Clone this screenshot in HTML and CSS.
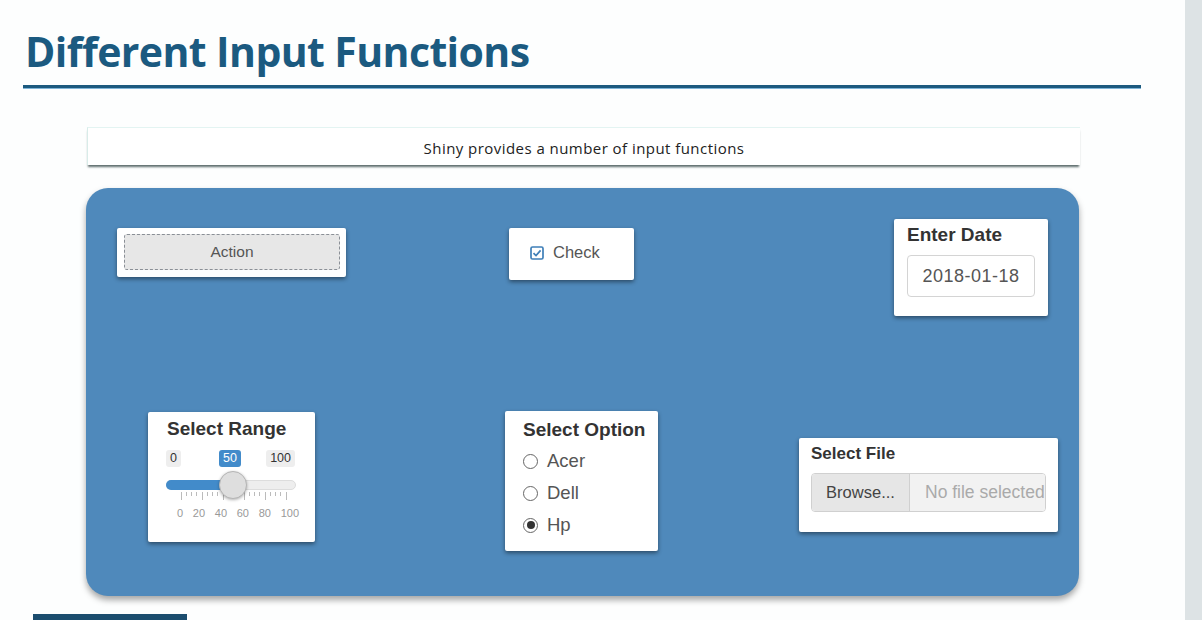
FILE: index.html
```html
<!DOCTYPE html>
<html>
<head>
<meta charset="utf-8">
<link rel="stylesheet" href="styles.css">
</head>
<body>
<div class="slide">
  <h1 class="title">Different Input Functions</h1>
  <div class="rule"></div>
  <div class="banner">Shiny provides a number of input functions</div>
  <div class="panel">
    <div class="card card-action">
      <div class="btn">Action</div>
    </div>
    <div class="card card-check">
      <svg class="cbox" width="14" height="14" viewBox="0 0 14 14"><rect x="1" y="1" width="12" height="12" rx="1.5" fill="#fff" stroke="#3f7fb8" stroke-width="1.7"/><path d="M3.5 7.2 L6 9.6 L10.6 4.4" fill="none" stroke="#3f7fb8" stroke-width="1.7"/></svg>
      <span class="check-label">Check</span>
    </div>
    <div class="card card-date">
      <div class="lbl">Enter Date</div>
      <div class="date-input">2018-01-18</div>
    </div>
    <div class="card card-range">
      <div class="lbl">Select Range</div>
      <div class="slider">
        <div class="s-labels">
          <span class="s-tag">0</span>
          <span class="s-tag">100</span>
          <span class="s-val" style="left:53px">50</span>
        </div>
        <div class="s-track">
          <div class="s-fill" style="width:66px"></div>
          <div class="s-handle" style="left:52px"></div>
        </div>
        <svg class="s-ticks" width="130" height="9" viewBox="0 0 130 9">
          <g stroke="#bbb" stroke-width="1">
            <path d="M15.5 0v8M36.5 0v8M57.5 0v8M78.5 0v8M99.5 0v8M120.5 0v8"/>
            <path d="M20.5 0v4M25.5 0v4M30.5 0v4M41.5 0v4M46.5 0v4M51.5 0v4M62.5 0v4M67.5 0v4M72.5 0v4M83.5 0v4M88.5 0v4M93.5 0v4M104.5 0v4M109.5 0v4M114.5 0v4"/>
          </g>
        </svg>
        <div class="s-grid">
          <span>0</span><span>20</span><span>40</span><span>60</span><span>80</span><span>100</span>
        </div>
      </div>
    </div>
    <div class="card card-option">
      <div class="lbl">Select Option</div>
      <div class="radio"><span class="rcircle"></span>Acer</div>
      <div class="radio"><span class="rcircle"></span>Dell</div>
      <div class="radio"><span class="rcircle on"></span>Hp</div>
    </div>
    <div class="card card-file">
      <div class="lbl lbl-file">Select File</div>
      <div class="file-group">
        <div class="browse">Browse...</div>
        <div class="file-name">No file selected</div>
      </div>
    </div>
  </div>
  <div class="footbar"></div>
</div>
<div class="strip"></div>
</body>
</html>
```

FILE: styles.css
```css
html, body {
  margin: 0;
  padding: 0;
  height: 620px;
  overflow: hidden;
  background: #fdfefe;
}
body {
  display: flex;
  font-family: "Liberation Sans", Arial, sans-serif;
}
.slide {
  width: 1185px;
  flex: none;
}
.strip {
  flex: 1;
  background: #dde3e5;
}
.title {
  margin: 0;
  padding: 24px 0 0 25px;
  height: 58px;
  font-family: "Open Sans", "Noto Sans", sans-serif;
  font-weight: 700;
  font-size: 41px;
  line-height: 54px;
  color: #1b5a80;
  letter-spacing: -0.6px;
}
.rule {
  margin: 3px 0 0 23px;
  width: 1118px;
  height: 3px;
  background: #1c5a7f;
  box-shadow: 0 1px 0 #7fb5d8;
}
.banner {
  margin: 39px 0 0 87px;
  width: 993px;
  height: 38px;
  box-sizing: border-box;
  background: #fff;
  border-top: 1px solid #e3f4f2;
  border-left: 1px solid #d8ece9;
  box-shadow: 0 3px 2px -1px rgba(40, 60, 60, 0.75);
  text-align: center;
  font-family: "Open Sans", sans-serif;
  font-size: 15px;
  line-height: 40px;
  color: #222;
  letter-spacing: 0.45px;
}
.panel {
  margin: 23px 0 0 86px;
  width: 993px;
  height: 408px;
  background: #4f89bb;
  border-radius: 22px;
  box-shadow: 0 4px 6px rgba(0, 0, 0, 0.35);
  display: grid;
  grid-template-columns: 394px 280px 319px;
  grid-template-rows: 200px 208px;
  align-items: start;
  justify-items: start;
}
.card {
  background: #fff;
  border-radius: 2px;
  box-shadow: 0 2px 4px rgba(0, 0, 0, 0.45);
  box-sizing: border-box;
  color: #333;
}
.lbl {
  font-weight: 700;
  font-size: 19px;
  line-height: 22px;
  color: #333;
}
.card-action {
  margin: 40px 0 0 31px;
  width: 229px;
  height: 49px;
  padding: 6px 6px 0 7px;
}
.btn {
  height: 36px;
  box-sizing: border-box;
  background: #e7e7e7;
  border: 1px dashed #8a8f96;
  border-radius: 3px;
  text-align: center;
  font-size: 15.5px;
  line-height: 34px;
  color: #555;
}
.card-check {
  margin: 40px 0 0 29px;
  width: 125px;
  height: 52px;
  padding: 0 0 3px 21px;
  display: flex;
  align-items: center;
  gap: 9px;
}
.cbox {
  flex: none;
}
.check-label {
  font-size: 16.5px;
  color: #555;
}
.card-date {
  margin: 31px 0 0 134px;
  width: 154px;
  height: 97px;
  padding: 5px 0 0 13px;
}
.date-input {
  margin-top: 9px;
  width: 128px;
  height: 42px;
  box-sizing: border-box;
  border: 1px solid #d4d4d4;
  border-radius: 4px;
  text-align: center;
  font-size: 18px;
  letter-spacing: 0.5px;
  line-height: 40px;
  color: #555;
}
.card-range {
  margin: 24px 0 0 62px;
  width: 167px;
  height: 130px;
  padding: 6px 0 0 19px;
}
.slider {
  width: 130px;
  margin: 10px 0 0 -1px;
}
.s-labels {
  position: relative;
  height: 17px;
  display: flex;
  justify-content: space-between;
}
.s-tag, .s-val {
  font-size: 12.5px;
  line-height: 17px;
  padding: 0 4px;
  border-radius: 3px;
  background: #eee;
  color: #333;
}
.s-tag:nth-child(2) {
  margin-right: 1px;
}
.s-val {
  position: absolute;
  top: 0;
  background: #428bca;
  color: #fff;
}
.s-track {
  position: relative;
  margin-top: 13px;
  height: 10px;
  box-sizing: border-box;
  background: #eee;
  border: 1px solid #ddd;
  border-radius: 5px;
}
.s-fill {
  height: 10px;
  margin: -1px 0 0 -1px;
  background: #428bca;
  border-radius: 5px 0 0 5px;
}
.s-handle {
  position: absolute;
  top: -10px;
  width: 28px;
  height: 28px;
  box-sizing: border-box;
  border-radius: 50%;
  background: #dedede;
  border: 1px solid #b5b5b5;
  box-shadow: 0 1px 3px rgba(0, 0, 0, 0.3);
}
.s-ticks {
  display: block;
  margin-top: 2px;
}
.s-grid {
  display: flex;
  margin: 6px 0 0 11px;
  width: 122px;
  justify-content: space-between;
  font-size: 11px;
  line-height: 13px;
  color: #999;
}
.card-option {
  margin: 23px 0 0 25px;
  width: 153px;
  height: 140px;
  padding: 8px 0 0 18px;
}
.card-option .lbl {
  margin-bottom: 4px;
}
.radio {
  height: 32px;
  display: flex;
  align-items: center;
  gap: 9px;
  font-size: 18.5px;
  color: #555;
}
.rcircle {
  width: 15px;
  height: 15px;
  box-sizing: border-box;
  border: 1.5px solid #666;
  border-radius: 50%;
  display: flex;
  align-items: center;
  justify-content: center;
}
.rcircle.on::after {
  content: "";
  width: 8px;
  height: 8px;
  border-radius: 50%;
  background: #333;
}
.card-file {
  margin: 50px 0 0 39px;
  width: 259px;
  height: 94px;
  padding: 6px 0 0 12px;
}
.lbl-file {
  font-size: 17px;
  line-height: 20px;
}
.file-group {
  margin-top: 9px;
  width: 235px;
  height: 39px;
  display: flex;
  box-sizing: border-box;
  border: 1px solid #d0d0d0;
  border-radius: 4px;
  overflow: hidden;
}
.browse {
  width: 97px;
  flex: none;
  background: #e6e6e6;
  border-right: 1px solid #d0d0d0;
  text-align: center;
  font-size: 16.5px;
  line-height: 37px;
  color: #444;
}
.file-name {
  flex: 1;
  background: #f2f2f2;
  padding-left: 15px;
  font-size: 17.5px;
  line-height: 37px;
  color: #aaa;
  white-space: nowrap;
  overflow: hidden;
}
.footbar {
  margin: 18px 0 0 33px;
  width: 154px;
  height: 6px;
  background: #1b4d6e;
}
```
